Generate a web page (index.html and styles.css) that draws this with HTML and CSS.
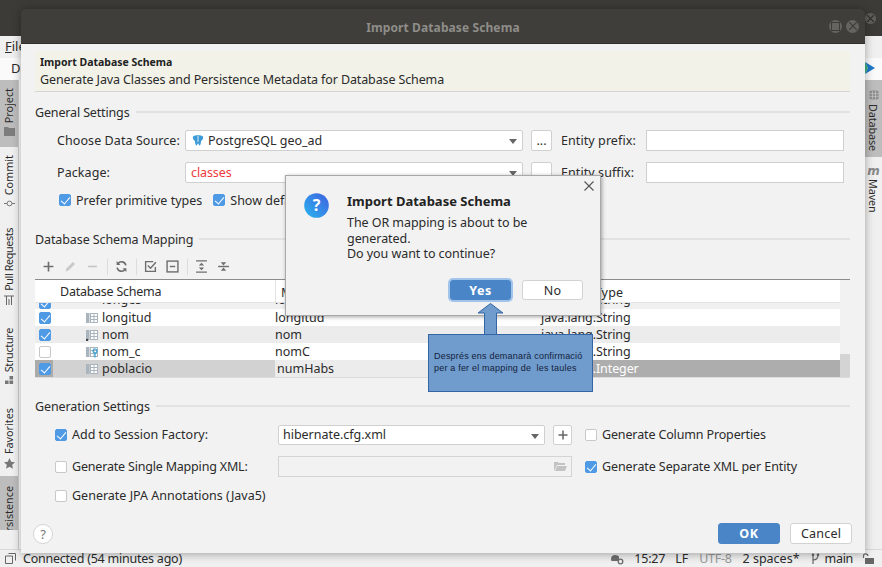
FILE: index.html
```html
<!DOCTYPE html>
<html lang="en">
<head>
<meta charset="utf-8">
<title>Import Database Schema</title>
<link rel="stylesheet" href="styles.css">
</head>
<body>
<div class="ide">
  <div class="ide-title"></div>
  <div class="ide-menu"><u>F</u>ile</div>
  <div class="ide-crumbs">Da
    <svg class="run-logo" width="14" height="12" viewBox="0 0 14 12"><path d="M4 0l10 6-10 6 3-6z" fill="#1e78c9"/><path d="M4 0l3 6-3 6-4-6z" fill="#37b37e"/></svg>
  </div>
  <div class="ide-mid">
    <div class="strip strip-left">
      <div class="vtab vt-project sel"><span>Project</span><svg width="11" height="9" viewBox="0 0 11 9"><path d="M0 0h4l1 1h6v8H0z" fill="#7d7d7d"/></svg></div>
      <div class="vtab vt-commit"><span>Commit</span><svg width="11" height="9" viewBox="0 0 11 9"><circle cx="5.500" cy="4.500" r="2.400" fill="none" stroke="#777"/><path d="M0 4.500h3M8 4.500h3" stroke="#777"/></svg></div>
      <div class="vtab vt-pull"><span>Pull Requests</span><svg width="10" height="10" viewBox="0 0 10 10"><path d="M0 1h10M2.500 1v9M7.500 1v9M5 4v6" stroke="#666" fill="none"/></svg></div>
      <div class="vtab vt-struct"><span>Structure</span><svg width="9" height="9" viewBox="0 0 10 10"><path d="M0 5h4v4H0zM5 5h4v4H5zM5 0h4v4H5z" fill="#777"/></svg></div>
      <div class="vtab vt-fav"><span>Favorites</span><svg width="11" height="11" viewBox="0 0 11 11"><path d="M5.500 0l1.700 3.700 3.800.5-2.800 2.600.7 4-3.400-2-3.400 2 .7-4L0 4.200l3.800-.5z" fill="#777"/></svg></div>
      <div class="vtab vt-pers sel"><span>rsistence</span></div>
    </div>
    <div class="ide-center"></div>
    <div class="strip strip-right">
      <div class="vtab-r vr-db sel"><svg width="10" height="10" viewBox="0 0 10 11"><path d="M0 1.500C0 .3 10 .3 10 1.500v8c0 1.200-10 1.200-10 0z" fill="#8c8c8c"/><path d="M0 4h10M0 7h10M3.300 1v9M6.600 1v9" stroke="#d0d0d0" stroke-width=".7"/></svg><span>Database</span></div>
      <div class="vtab-r vr-mvn"><i class="mvn-m">m</i><span>Maven</span></div>
    </div>
  </div>
  <div class="status">
    <svg width="11" height="11" viewBox="0 0 11 11"><path d="M3.500.5h7v7M.5 3h7v7.500h-7z" fill="none" stroke="#666"/></svg>
    <span class="st-msg">Connected (54 minutes ago)</span>
    <svg class="st-git" width="14" height="12" viewBox="0 0 14 12"><path d="M1 6c0-3 2-4 4-4s3 1 4 1.500V8H2C1 8 1 7 1 6z" fill="#6e6e6e"/><circle cx="10.500" cy="8.500" r="2.300" fill="none" stroke="#6e6e6e" stroke-width="1.300"/></svg>
    <span class="st-time">15:27</span>
    <span class="st-lf">LF</span>
    <span class="st-enc">UTF-8</span>
    <span class="st-sp">2 spaces*</span>
    <svg class="st-branch" width="9" height="12" viewBox="0 0 9 12"><path d="M2 1v10M2 7c3 0 5-1 5-5" fill="none" stroke="#666" stroke-width="1.200"/><circle cx="2" cy="1.800" r="1.300" fill="#666"/><circle cx="7" cy="1.800" r="1.300" fill="#666"/></svg>
    <span class="st-main">main</span>
    <svg class="st-lock" width="13" height="11" viewBox="0 0 13 11"><path d="M1.500 5V3a2.200 2.200 0 0 1 4.400 0" fill="none" stroke="#666" stroke-width="1.200"/><path d="M3 5h9v6H3z" fill="#666"/></svg>
  </div>
  <button class="top-close" aria-label="Close"><svg width="7" height="7" viewBox="0 0 7 7"><path d="M0 0l7 7M7 0L0 7" stroke="#2e2d2a" stroke-width="1.200"/></svg></button>

  <section class="dialog">
    <header class="dlg-title">
      <span class="dlg-title-text">Import Database Schema</span>
      <span class="wbtn"><svg width="9" height="9" viewBox="0 0 9 9"><rect x=".5" y=".5" width="8" height="8" fill="none" stroke="#3d3c38"/></svg></span>
      <span class="wbtn"><svg width="8" height="8" viewBox="0 0 8 8"><path d="M0 0l8 8M8 0L0 8" stroke="#3d3c38" stroke-width="1.200"/></svg></span>
    </header>
    <div class="dlg-body">
      <div class="banner">
        <div class="banner-title">Import Database Schema</div>
        <div class="banner-sub">Generate Java Classes and Persistence Metadata for Database Schema</div>
      </div>

      <div class="group general">
        <div class="group-head"><span class="h-gen">General Settings</span><i></i></div>
        <div class="form-row">
          <label class="lbl">Choose Data Source:</label>
          <div class="combo c-src">
            <svg class="pg" width="12" height="12" viewBox="0 0 12 12"><path d="M1 1.500C3-.2 9-.2 11 1.500c.6 2-1 4-2 4.500 0 2-.5 4.500-1.500 4.500S7 8.500 6 8.500 5.500 10.500 4.500 10.500 3 8 3 6C2 5.500.4 3.500 1 1.500z" fill="#3c9bd6"/><path d="M6 1v6" stroke="#fff" stroke-width=".8"/></svg>
            <span>PostgreSQL geo_ad</span><b class="caret"></b>
          </div>
          <button class="mini">...</button>
          <label class="lbl lbl-e">Entity prefix:</label>
          <div class="input c-ent"></div>
        </div>
        <div class="form-row">
          <label class="lbl">Package:</label>
          <div class="combo c-src">
            <span class="red">classes</span><b class="caret"></b>
          </div>
          <button class="mini"></button>
          <label class="lbl lbl-e">Entity suffix:</label>
          <div class="input c-ent"></div>
        </div>
        <div class="check-row">
          <span class="chk on"></span><span class="chk-t t-prim">Prefer primitive types</span>
          <span class="chk on"></span><span class="chk-t">Show default relationships</span>
        </div>
      </div>

      <div class="group mapping">
        <div class="group-head"><span class="h-map">Database Schema Mapping</span><i></i></div>
        <div class="toolbar">
          <svg class="ti" width="13" height="13" viewBox="0 0 12 12"><path d="M6 1.500v9M1.500 6h9" stroke="#6e6e6e" stroke-width="1.500"/></svg>
          <svg class="ti" width="13" height="13" viewBox="0 0 12 12"><path d="M1.500 10.500l.7-2.700 6-6 2 2-6 6z" fill="#c9c9c9"/></svg>
          <svg class="ti" width="13" height="13" viewBox="0 0 12 12"><path d="M2 6h8" stroke="#c4c4c4" stroke-width="1.500"/></svg>
          <i class="ts"></i>
          <svg class="ti" width="13" height="13" viewBox="0 0 12 12"><path d="M10 5a4 4 0 0 0-7.300-1.500M2 7a4 4 0 0 0 7.300 1.500" fill="none" stroke="#6e6e6e" stroke-width="1.500"/><path d="M1.500 1v3.500H5M10.500 11V7.500H7" fill="#6e6e6e"/></svg>
          <i class="ts"></i>
          <svg class="ti" width="13" height="13" viewBox="0 0 12 12"><path d="M10.500 6.500v4h-9v-9h7" fill="none" stroke="#6e6e6e" stroke-width="1.300"/><path d="M3.500 5l2.500 2.500L11 2" fill="none" stroke="#6e6e6e" stroke-width="1.300"/></svg>
          <svg class="ti" width="13" height="13" viewBox="0 0 12 12"><rect x="1" y="1" width="10" height="10" fill="none" stroke="#6e6e6e" stroke-width="1.300"/><path d="M3.500 6h5" stroke="#6e6e6e" stroke-width="1.300"/></svg>
          <i class="ts"></i>
          <svg class="ti" width="13" height="13" viewBox="0 0 12 12"><path d="M1 .8h10M1 11.200h10" stroke="#6e6e6e" stroke-width="1.300"/><path d="M6 2.500L8.500 5h-5zM6 9.500L3.500 7h5z" fill="#6e6e6e"/></svg>
          <svg class="ti" width="13" height="13" viewBox="0 0 12 12"><path d="M1 6h10" stroke="#6e6e6e" stroke-width="1.300"/><path d="M6 5L3.500 2h5zM6 7L8.500 10h-5z" fill="#6e6e6e"/></svg>
        </div>
        <div class="tbl">
          <div class="tr thead"><div class="td c0"></div><div class="td c1">Database Schema</div><div class="td c2">Mapped Name</div><div class="td c3">Mapped Type</div></div>
          <div class="tr partial"><div class="td c0"><span class="chk on"></span></div><div class="td c1"><span class="clip">longes</span></div><div class="td c2"><span class="clip">longes</span></div><div class="td c3"><span class="clip">java.lang.String</span></div></div>
          <div class="tr"><div class="td c0"><span class="chk on"></span></div><div class="td c1"><svg class="col" width="12" height="12" viewBox="0 0 12 12"><use href="#column"/></svg><span>longitud</span></div><div class="td c2">longitud</div><div class="td c3">java.lang.String</div></div>
          <div class="tr alt"><div class="td c0"><span class="chk on"></span></div><div class="td c1"><svg class="col" width="12" height="12" viewBox="0 0 12 12"><use href="#column"/><circle cx="1" cy="11" r="1.300" fill="#444"/></svg><span>nom</span></div><div class="td c2">nom</div><div class="td c3">java.lang.String</div></div>
          <div class="tr"><div class="td c0"><span class="chk"></span></div><div class="td c1"><svg class="col" width="12" height="12" viewBox="0 0 12 12"><use href="#column"/><circle cx="9" cy="5" r="2" fill="none" stroke="#2e9ed6" stroke-width="1.200"/><path d="M9 7v4.500" stroke="#2e9ed6" stroke-width="1.200"/></svg><span>nom_c</span></div><div class="td c2">nomC</div><div class="td c3">java.lang.String</div></div>
          <div class="tr picked"><div class="td c0"><span class="chk on"></span></div><div class="td c1"><svg class="col" width="12" height="12" viewBox="0 0 12 12"><use href="#column"/></svg><span>poblacio</span></div><div class="td c2 edit">numHabs</div><div class="td c3 dark">java.lang.Integer</div></div>
          <div class="scroll"><i></i></div>
        </div>
      </div>

      <div class="group gen">
        <div class="group-head"><span class="h-gs">Generation Settings</span><i></i></div>
        <div class="gen-grid">
          <div class="gcell"><span class="chk on"></span><span class="chk-t">Add to Session Factory:</span></div>
          <div class="combo c-hib"><span>hibernate.cfg.xml</span><b class="caret"></b></div>
          <button class="mini plus"><svg width="10" height="10" viewBox="0 0 10 10"><path d="M5 .5v9M.5 5h9" stroke="#666" stroke-width="1.500"/></svg></button>
          <div class="gcell g-right"><span class="chk"></span><span class="chk-t t-col">Generate Column Properties</span></div>

          <div class="gcell"><span class="chk"></span><span class="chk-t t-sgl">Generate Single Mapping XML:</span></div>
          <div class="input disabled"><svg width="13" height="11" viewBox="0 0 13 11"><path d="M0 1h4l1 1h6v2H3L0 10z" fill="#c3c3c3"/><path d="M3 5h10l-2 5H1z" fill="#c3c3c3"/></svg></div>
          <div class="gcell g-right"><span class="chk on"></span><span class="chk-t t-sep">Generate Separate XML per Entity</span></div>

          <div class="gcell g-wide"><span class="chk"></span><span class="chk-t">Generate JPA Annotations (Java5)</span></div>
        </div>
      </div>

      <footer class="dlg-foot">
        <button class="help">?</button>
        <button class="btn primary">OK</button>
        <button class="btn">Cancel</button>
      </footer>
    </div>
  </section>

  <section class="confirm">
    <svg class="cf-close" width="10" height="10" viewBox="0 0 10 10"><path d="M.5.500l9 9M9.500.500l-9 9" stroke="#555" stroke-width="1.100"/></svg>
    <svg class="cf-icon" width="25" height="25" viewBox="0 0 25 25"><defs><linearGradient id="q" x1="0" y1="1" x2="1" y2="0"><stop offset="0" stop-color="#2ab5ee"/><stop offset="1" stop-color="#3f5fe0"/></linearGradient></defs><circle cx="12.500" cy="12.500" r="12.300" fill="url(#q)"/><text x="12.500" y="18" text-anchor="middle" class="q-mark">?</text></svg>
    <div class="cf-main">
      <h2 class="cf-title">Import Database Schema</h2>
      <p class="cf-text">The OR mapping is about to be generated.<br>Do you want to continue?</p>
      <div class="cf-btns">
        <button class="btn primary yes">Yes</button>
        <button class="btn no">No</button>
      </div>
    </div>
  </section>

  <svg class="callout-arrow" width="30" height="34" viewBox="0 0 30 34"><path d="M14.500.500L27 10h-6.500v24h-12V10H2z" fill="#6f9bcd" stroke="#3465a4"/></svg>
  <aside class="callout">
    <div class="cl-line">Després ens demanarà confirmació</div>
    <div class="cl-line">per a fer el mapping de  les taules</div>
  </aside>
</div>
<svg class="defs" width="0" height="0"><defs><g id="column"><rect x="0" y="1" width="3.500" height="10" fill="#a9b4bd"/><rect x="4.500" y="1.500" width="7" height="9" fill="#fff" stroke="#a9b4bd"/><path d="M4.500 4.500h7M4.500 7.500h7M8 1.500v9" stroke="#a9b4bd"/></g></defs></svg>
</body>
</html>
```
FILE: styles.css
```css
* { box-sizing: border-box; }
html, body { margin: 0; padding: 0; }
body { width: 882px; height: 567px; overflow: hidden; font-family: "Noto Sans", "Open Sans", sans-serif; font-size: 12.5px; color: #2b2b2b; }
button { font: inherit; color: inherit; padding: 0; }
.defs { position: absolute; }

.ide { position: relative; width: 882px; height: 567px; display: flex; flex-direction: column; background: #f2f2f2; overflow: hidden; }
.ide-title { height: 36px; background: #3c3b37; flex: none; }
.ide-menu { height: 22px; flex: none; background: #f0f0f0; padding: 1px 0 0 5px; font-size: 13px; line-height: 18px; }
.ide-crumbs { height: 22px; flex: none; background: #fafafa; padding-left: 11px; line-height: 20px; position: relative; font-size: 13px; }
.run-logo { position: absolute; right: 7px; top: 4px; }
.ide-mid { flex: 1; display: flex; min-height: 0; }
.strip { width: 19px; flex: none; background: #f0f0f0; border-right: 1px solid #d0d0d0; }
.strip-right { width: 17px; border-right: 0; }
.ide-center { flex: 1; background: #fff; }
.vtab { display: flex; flex-direction: column; align-items: center; justify-content: flex-start; gap: 4px; width: 18px; font-size: 10.8px; overflow: hidden; }
.vtab span { writing-mode: vertical-rl; transform: rotate(180deg); line-height: 18px; }
.vtab.sel { background: #bdbdbd; }
.vt-project { height: 67px; padding-top: 8px; }
.vt-commit { height: 78px; padding-top: 8px; }
.vt-pull { height: 100px; padding-top: 3px; letter-spacing: -.4px; }
.vt-struct { height: 80px; padding-top: 3px; letter-spacing: -.3px; }
.vt-fav { height: 71px; padding-top: 3px; }
.vt-pers { height: 54px; padding-top: 10px; }
.vtab-r { display: flex; flex-direction: column; align-items: center; gap: 4px; width: 17px; padding-top: 10px; font-size: 10.8px; }
.vtab-r span { writing-mode: vertical-rl; line-height: 17px; letter-spacing: -.1px; }
.vtab-r.sel { background: #bdbdbd; }
.vr-db { height: 77px; }
.vr-mvn { padding-top: 8px; gap: 2px; }
.mvn-m { font: italic bold 12px "DejaVu Sans", sans-serif; color: #888; line-height: 12px; }

.status { height: 18px; flex: none; background: #f0f0f0; border-top: 1px solid #d9d9d9; display: flex; align-items: center; padding-left: 5px; font-size: 12.5px; line-height: 16px; }
.st-msg { margin-left: 7px; flex: 1; letter-spacing: -.23px; }
.st-git { margin-right: 10px; }
.st-time { margin-right: 10px; letter-spacing: -.2px; }
.st-lf { margin-right: 11px; }
.st-enc { color: #9a9a9a; margin-right: 11px; letter-spacing: -.3px; }
.st-sp { margin-right: 11px; }
.st-branch { margin-right: 5px; }
.st-main { margin-right: 9px; letter-spacing: -.3px; }
.st-lock { margin-right: 7px; }
.top-close { position: absolute; left: 865px; top: 13px; width: 11px; height: 11px; border-radius: 50%; border: 0; background: #5f5e5a; display: flex; align-items: center; justify-content: center; }

/* main dialog */
.dialog { position: absolute; left: 21px; top: 9px; width: 844px; height: 544px; display: flex; flex-direction: column; box-shadow: 0 1px 10px rgba(0,0,0,.35); border-radius: 5px 5px 0 0; }
.dlg-title { height: 35px; flex: none; background: #3f3e3a; border-bottom: 1px solid #2e2d2a; border-radius: 5px 5px 0 0; display: flex; align-items: center; justify-content: flex-end; gap: 4px; padding: 0 6px 0 0; position: relative; color: #8e8d89; }
.dlg-title-text { position: absolute; left: 0; right: 0; top: 10px; text-align: center; font-weight: 700; font-size: 12px; line-height: 17px; letter-spacing: .1px; }
.wbtn { width: 13px; height: 13px; border-radius: 50%; background: #656460; display: flex; align-items: center; justify-content: center; }
.dlg-body { flex: 1; background: #f2f2f2; padding: 7px 15px 0 14px; display: flex; flex-direction: column; min-height: 0; }

.banner { height: 41px; flex: none; background: #f2f2e8; border-bottom: 1px solid #d5d5d5; padding: 4px 0 0 5px; }
.banner-title { font-weight: 700; font-size: 10.5px; line-height: 14px; color: #222; }
.banner-sub { font-size: 12.5px; line-height: 21px; letter-spacing: -.12px; }

.group-head { display: flex; align-items: center; gap: 6px; height: 18px; font-size: 12.5px; }
.group-head i { flex: 1; height: 2px; background: #e2e2e2; }
.h-gen { letter-spacing: -.15px; }
.h-map { letter-spacing: -.1px; }
.h-gs { letter-spacing: -.1px; }
.general { margin-top: 11px; }
.form-row { display: flex; align-items: center; height: 21px; padding-left: 22px; }
.group-head + .form-row { margin-top: 9px; }
.form-row + .form-row { margin-top: 11px; }
.lbl { width: 128px; flex: none; letter-spacing: .08px; }
.combo { position: relative; display: flex; align-items: center; background: #fff; border: 1px solid #d0d0d0; border-radius: 2px; height: 21px; padding-left: 5px; }
.c-src { width: 338px; }
.red { color: #f03a3a; letter-spacing: -.1px; }
.pg { margin-right: 4px; margin-left: 1px; }
.caret { position: absolute; right: 5px; top: 8px; width: 0; height: 0; border: 4px solid transparent; border-top: 5px solid #666; border-bottom: 0; }
.mini { width: 21px; height: 21px; flex: none; background: #fff; border: 1px solid #d0d0d0; border-radius: 2px; margin-left: 8px; display: flex; align-items: center; justify-content: center; line-height: 14px; }
.lbl-e { width: 85px; margin-left: 9px; }
.input { background: #fff; border: 1px solid #cfcfcf; height: 21px; }
.c-ent { width: 198px; }
.check-row { display: flex; align-items: center; padding-left: 24px; height: 16px; margin-top: 9px; }
.chk { display: inline-block; position: relative; width: 12px; height: 12px; flex: none; border: 1px solid #c8c8c8; border-radius: 2px; background: #fff; }
.chk.on { background: #4f9ae5; border-color: #4f9ae5; }
.chk.on::after { content: ""; position: absolute; left: 3px; top: 0; width: 4px; height: 8px; border: solid #fff; border-width: 0 1.500px 1.500px 0; transform: rotate(40deg); }
.chk-t { margin-left: 5px; }
.t-prim { margin-right: 11px; }
.t-sgl { letter-spacing: -.19px; }
.t-col { letter-spacing: -.14px; }
.t-sep { letter-spacing: -.09px; }

.mapping { margin-top: 22px; }
.toolbar { display: flex; align-items: center; gap: 9px; height: 25px; padding-left: 7px; margin-top: 6px; }
.ts { width: 1px; height: 16px; background: #dcdcdc; margin: 0 -1.500px; }
.tbl { position: relative; height: 99px; border-top: 1px solid #8c8c8c; border-bottom: 1px solid #dcdcdc; background: #fff; overflow: hidden; padding-right: 10px; }
.tr { display: grid; grid-template-columns: 18px 222px 263px 1fr; height: 17px; line-height: 17px; }
.td { white-space: nowrap; overflow: hidden; }
.c0 { display: flex; align-items: center; justify-content: center; padding-left: 1px; }
.c1 { display: flex; align-items: center; padding-left: 33px; }
.c3 { padding-left: 3px; letter-spacing: -.1px; }
.col { margin-right: 4px; flex: none; }
.thead { height: 23px; line-height: 25px; background: #fff; border-bottom: 1px solid #e4e4e4; }
.thead .c1 { padding-left: 7px; letter-spacing: -.25px; }
.thead .c2 { border-left: 1px solid #e4e4e4; padding-left: 5px; }
.thead .c3 { border-left: 1px solid #e4e4e4; letter-spacing: .15px; }
.partial { height: 6px; background: #f0f0f0; }
.partial .td { line-height: 6px; height: 6px; }
.partial .c1 { padding-left: 49px; align-items: flex-start; }
.partial .chk { margin-top: -6px; }
.clip { position: relative; top: -6px; }
.alt { background: #ececec; }
.picked { background: #d2d2d2; height: 18px; line-height: 18px; }
.picked .c0 { background: #ababab; }
.picked .edit { background: #ececec; padding-left: 2px; }
.picked .dark { background: #adadad; color: #fff; }
.scroll { position: absolute; right: 0; top: 0; bottom: 0; width: 10px; background: #f2f2f2; }
.scroll i { position: absolute; left: 0; right: 0; bottom: 0; height: 23px; background: #d4d4d4; }

.gen { margin-top: 19px; }
.gen-grid { display: grid; grid-template-columns: 243px 267px 27px 1fr; grid-template-rows: 21px 21px 19px; row-gap: 11px; margin-top: 9px; align-items: center; }
.gcell { display: flex; align-items: center; padding-left: 20px; }
.g-right { padding-left: 13px; grid-column: 4; }
.c-hib { width: 267px; height: 20px; padding-left: 4px; letter-spacing: -.02px; }
.gen-grid .plus { margin-left: 8px; width: 19px; height: 20px; }
.disabled { grid-column: 2 / 4; width: 294px; background: #f2f2f2; border-color: #d4d4d4; display: flex; justify-content: flex-end; align-items: center; padding-right: 4px; }
.g-wide { grid-column: 1 / -1; margin-top: -4px; }

.dlg-foot { margin: auto -2px 0 0; height: 38px; padding-bottom: 1px; display: flex; align-items: center; gap: 10px; }
.help { width: 20px; height: 20px; border-radius: 50%; background: #fff; border: 1px solid #d4d4d4; color: #777; font-size: 13px; line-height: 16px; margin-right: auto; margin-left: -2px; }
.btn { width: 62px; height: 21px; background: #fff; border: 1px solid #d2d2d2; border-radius: 3px; line-height: 17px; letter-spacing: .2px; }
.btn.primary { background: #4a86c7; border-color: #4a86c7; color: #fff; font-weight: 700; letter-spacing: .6px; }

/* confirmation */
.confirm { position: absolute; left: 285px; top: 175px; width: 316px; height: 141px; background: #f2f2f2; border: 1px solid #a8a8a8; box-shadow: 1px 1px 4px rgba(0,0,0,.35); padding: 16px 0 0 61px; }
.cf-close { position: absolute; right: 6px; top: 5px; }
.cf-icon { position: absolute; left: 18px; top: 17px; }
.q-mark { fill: #fff; font: 700 16px "Noto Sans", sans-serif; }
.cf-title { margin: 0; font-size: 13px; font-weight: 700; line-height: 18px; color: #222; }
.cf-text { margin: 5px 0 0; width: 190px; font-size: 12.5px; line-height: 15.500px; letter-spacing: -.06px; }
.cf-btns { position: absolute; left: 164px; top: 104px; display: flex; gap: 11px; }
.yes { width: 61px; height: 20px; box-shadow: 0 0 0 2px #a2c4ea; }
.no { width: 61px; height: 20px; }

.callout-arrow { position: absolute; left: 476px; top: 303px; }
.callout { position: absolute; left: 428px; top: 334px; width: 165px; height: 58px; background: #6f9bcd; border: 1px solid #3465a4; padding: 15px 0 0 5px; font: 9px/12px "Liberation Sans", sans-serif; color: #14223a; letter-spacing: .2px; }
.cl-line { white-space: pre; }
```
